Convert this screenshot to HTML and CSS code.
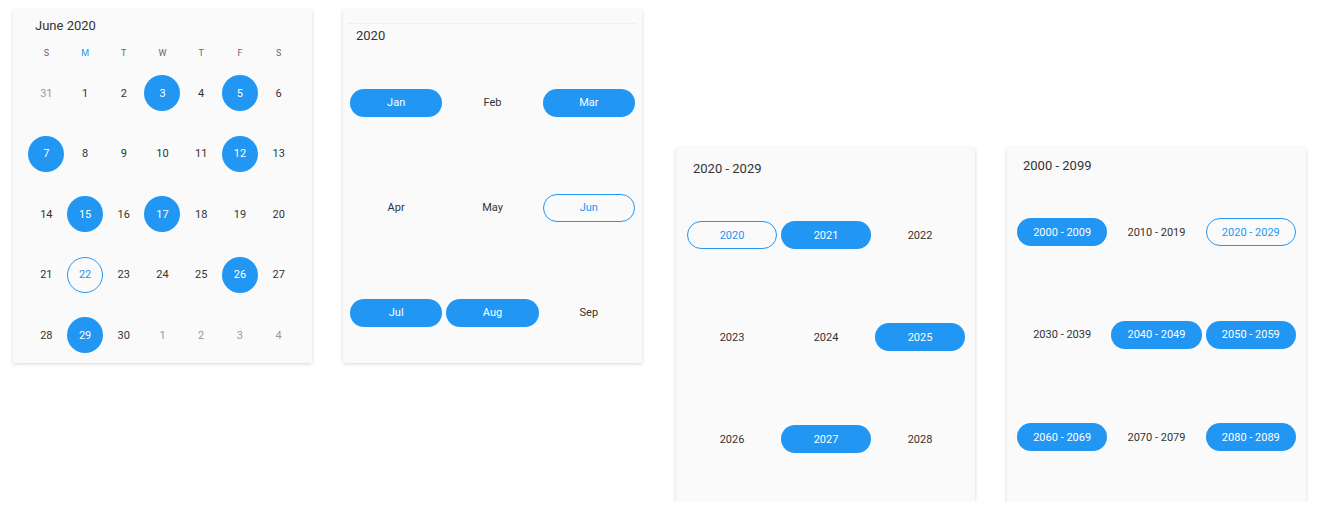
FILE: index.html
```html
<!DOCTYPE html>
<html lang="en">
<head>
<meta charset="UTF-8">
<meta name="viewport" content="width=device-width, initial-scale=1.0">
<title>Calendar views</title>
<link rel="stylesheet" href="styles.css">
</head>
<body>
  <div class="views">
    <!-- month view -->
    <div class="card month-card">
      <div class="month-title">June 2020</div>
      <div class="weekdays">
        <span>S</span><span class="current">M</span><span>T</span><span>W</span><span>T</span><span>F</span><span>S</span>
      </div>
      <div class="days">
        <div class="day other"><span>31</span></div>
        <div class="day"><span>1</span></div>
        <div class="day"><span>2</span></div>
        <div class="day"><span class="sel">3</span></div>
        <div class="day"><span>4</span></div>
        <div class="day"><span class="sel">5</span></div>
        <div class="day"><span>6</span></div>

        <div class="day"><span class="sel">7</span></div>
        <div class="day"><span>8</span></div>
        <div class="day"><span>9</span></div>
        <div class="day"><span>10</span></div>
        <div class="day"><span>11</span></div>
        <div class="day"><span class="sel">12</span></div>
        <div class="day"><span>13</span></div>

        <div class="day"><span>14</span></div>
        <div class="day"><span class="sel">15</span></div>
        <div class="day"><span>16</span></div>
        <div class="day"><span class="sel">17</span></div>
        <div class="day"><span>18</span></div>
        <div class="day"><span>19</span></div>
        <div class="day"><span>20</span></div>

        <div class="day"><span>21</span></div>
        <div class="day"><span class="today">22</span></div>
        <div class="day"><span>23</span></div>
        <div class="day"><span>24</span></div>
        <div class="day"><span>25</span></div>
        <div class="day"><span class="sel">26</span></div>
        <div class="day"><span>27</span></div>

        <div class="day"><span>28</span></div>
        <div class="day"><span class="sel">29</span></div>
        <div class="day"><span>30</span></div>
        <div class="day other"><span>1</span></div>
        <div class="day other"><span>2</span></div>
        <div class="day other"><span>3</span></div>
        <div class="day other"><span>4</span></div>
      </div>
    </div>

    <!-- year view -->
    <div class="card year-card">
      <div class="year-title">2020</div>
      <div class="grid months">
        <div class="cell"><span class="pill sel">Jan</span></div>
        <div class="cell"><span class="pill">Feb</span></div>
        <div class="cell"><span class="pill sel">Mar</span></div>
        <div class="cell"><span class="pill">Apr</span></div>
        <div class="cell"><span class="pill">May</span></div>
        <div class="cell"><span class="pill today">Jun</span></div>
        <div class="cell"><span class="pill sel">Jul</span></div>
        <div class="cell"><span class="pill sel">Aug</span></div>
        <div class="cell"><span class="pill">Sep</span></div>
      </div>
    </div>

    <!-- decade view -->
    <div class="card decade-card">
      <div class="range-title">2020 - 2029</div>
      <div class="grid years">
        <div class="cell"><span class="pill today">2020</span></div>
        <div class="cell"><span class="pill sel">2021</span></div>
        <div class="cell"><span class="pill">2022</span></div>
        <div class="cell"><span class="pill">2023</span></div>
        <div class="cell"><span class="pill">2024</span></div>
        <div class="cell"><span class="pill sel">2025</span></div>
        <div class="cell"><span class="pill">2026</span></div>
        <div class="cell"><span class="pill sel">2027</span></div>
        <div class="cell"><span class="pill">2028</span></div>
      </div>
    </div>

    <!-- century view -->
    <div class="card century-card">
      <div class="range-title">2000 - 2099</div>
      <div class="grid decades">
        <div class="cell"><span class="pill sel">2000 - 2009</span></div>
        <div class="cell"><span class="pill">2010 - 2019</span></div>
        <div class="cell"><span class="pill today">2020 - 2029</span></div>
        <div class="cell"><span class="pill">2030 - 2039</span></div>
        <div class="cell"><span class="pill sel">2040 - 2049</span></div>
        <div class="cell"><span class="pill sel">2050 - 2059</span></div>
        <div class="cell"><span class="pill sel">2060 - 2069</span></div>
        <div class="cell"><span class="pill">2070 - 2079</span></div>
        <div class="cell"><span class="pill sel">2080 - 2089</span></div>
      </div>
    </div>
  </div>
</body>
</html>
```

FILE: styles.css
```css
body {
  margin: 0;
  background: #fff;
  font-family: Roboto, "Liberation Sans", sans-serif;
  color: #333;
}

.views {
  display: flex;
  align-items: flex-start;
  padding: 10px 0 0 13px;
}

.card {
  width: 299px;
  background: #fafafa;
  box-shadow: 0 1px 4px rgba(0, 0, 0, 0.16);
  box-sizing: border-box;
  overflow: hidden;
}

/* month view */
.month-card {
  padding: 0 14px;
  height: 353px;
}

.month-title {
  height: 32px;
  line-height: 32px;
  padding-left: 8px;
  font-size: 13px;
}

.weekdays {
  display: grid;
  grid-template-columns: repeat(7, 1fr);
  height: 21px;
  align-items: center;
  font-size: 9px;
  color: #666;
  text-align: center;
}

.weekdays .current {
  color: #2196f3;
}

.days {
  display: grid;
  grid-template-columns: repeat(7, 1fr);
  grid-auto-rows: 60.5px;
}

.day {
  display: flex;
  justify-content: center;
  align-items: center;
  font-size: 11px;
}

.day span {
  width: 36px;
  height: 36px;
  border-radius: 50%;
  display: flex;
  justify-content: center;
  align-items: center;
  box-sizing: border-box;
}

.day.other {
  color: #999;
}

.day .sel {
  background: #2196f3;
  color: #fff;
}

.day .today {
  border: 1px solid #2196f3;
  color: #2196f3;
}

/* year / decade / century */
.year-card {
  margin-left: 31px;
  padding: 13px 5px 0;
  height: 353px;
}

.year-title {
  border-top: 1px solid #f0f0f0;
  height: 23px;
  line-height: 23px;
  padding-left: 8px;
  font-size: 13px;
}

.grid {
  display: grid;
  grid-template-columns: repeat(3, 1fr);
}

.months {
  padding-top: 3px;
  grid-auto-rows: 105px;
}

.cell {
  display: flex;
  justify-content: center;
  align-items: center;
  font-size: 11px;
  padding: 0 2px;
}

.pill {
  height: 28px;
  border-radius: 14px;
  display: flex;
  justify-content: center;
  align-items: center;
  box-sizing: border-box;
  width: 100%;
}

.pill.sel {
  background: #2196f3;
  color: #fff;
}

.pill.today {
  border: 1px solid #2196f3;
  color: #2196f3;
}

.decade-card {
  margin-left: 34px;
  margin-top: 138px;
  height: 354px;
  padding: 10px 8px 0 9px;
}

.range-title {
  line-height: 21px;
  font-size: 13px;
  padding-left: 8px;
}

.years {
  margin-top: 5px;
  grid-auto-rows: 102px;
}

.century-card {
  margin-left: 32px;
  margin-top: 138px;
  height: 354px;
  padding: 7px 8px 0;
}

.decades {
  margin-top: 5px;
  grid-auto-rows: 102.5px;
}
```
